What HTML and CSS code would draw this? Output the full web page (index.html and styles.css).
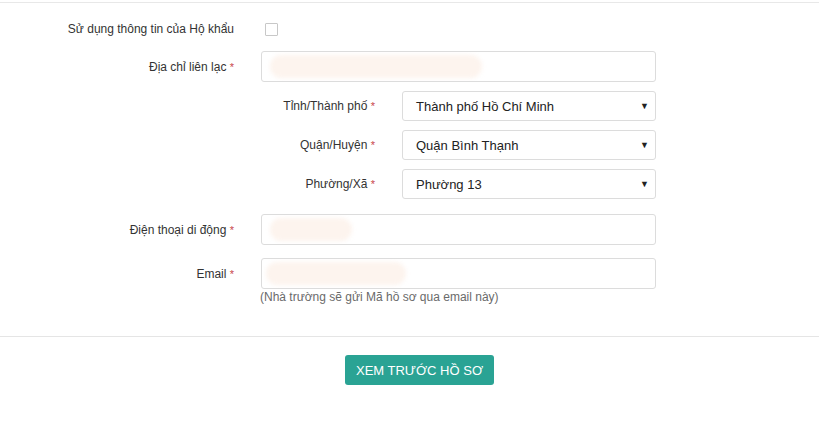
FILE: index.html
```html
<!DOCTYPE html>
<html lang="vi">
<head>
<meta charset="utf-8">
<link rel="stylesheet" href="styles.css">
</head>
<body>
<div class="panel">
  <div class="form">
    <div class="row row-check">
      <div class="label">Sử dụng thông tin của Hộ khẩu</div>
      <div class="field"><span class="checkbox"></span></div>
    </div>
    <div class="row row-addr">
      <div class="label">Địa chỉ liên lạc <span class="req">*</span></div>
      <div class="field"><div class="input"><span class="blur b-addr"></span></div></div>
    </div>
    <div class="sub">
      <div class="subrow">
        <div class="sublabel">Tỉnh/Thành phố <span class="req">*</span></div>
        <div class="select"><span>Thành phố Hồ Chí Minh</span><span class="caret">▼</span></div>
      </div>
      <div class="subrow">
        <div class="sublabel">Quận/Huyện <span class="req">*</span></div>
        <div class="select"><span>Quận Bình Thạnh</span><span class="caret">▼</span></div>
      </div>
      <div class="subrow">
        <div class="sublabel">Phường/Xã <span class="req">*</span></div>
        <div class="select"><span>Phường 13</span><span class="caret">▼</span></div>
      </div>
    </div>
    <div class="row row-phone">
      <div class="label">Điện thoại di động <span class="req">*</span></div>
      <div class="field"><div class="input"><span class="blur b-phone"></span></div></div>
    </div>
    <div class="row row-email">
      <div class="label">Email <span class="req">*</span></div>
      <div class="field">
        <div class="input"><span class="blur b-email"></span></div>
      </div>
    </div>
    <div class="help">(Nhà trường sẽ gửi Mã hồ sơ qua email này)</div>
  </div>
  <div class="footer">
    <button class="btn">XEM TRƯỚC HỒ SƠ</button>
  </div>
</div>
</body>
</html>
```
FILE: styles.css
```css
html, body {
  margin: 0;
  padding: 0;
  background: #fff;
}
body {
  font-family: "Liberation Sans", Arial, sans-serif;
  font-size: 12px;
  color: #333;
}
.panel {
  margin-top: 2px;
  border-top: 1px solid #e8e8e8;
}
.form {
  padding-top: 11px;
  padding-bottom: 31px;
  border-bottom: 1px solid #e5e5e5;
}
.row {
  display: flex;
  align-items: center;
  height: 30px;
}
.label {
  width: 261px;
  text-align: right;
  padding-right: 27px;
  box-sizing: border-box;
  flex: none;
}
.field {
  width: 395px;
  flex: none;
}
.req {
  color: #c8474a;
  font-size: 11px;
}
.checkbox {
  display: block;
  width: 11px;
  height: 11px;
  margin-left: 4px;
  border: 1px solid #c8c8c8;
  border-radius: 1px;
}
.row-addr {
  margin-top: 7px;
  height: 31px;
}
.input {
  height: 31px;
  box-sizing: border-box;
  border: 1px solid #dcdcdc;
  border-radius: 3px;
  position: relative;
  overflow: hidden;
}
.blur {
  position: absolute;
  top: 3px;
  height: 23px;
  background: #fdf4ee;
  border-radius: 12px;
  filter: blur(2px);
}
.b-addr { left: 8px; width: 212px; }
.b-phone { left: 8px; width: 82px; }
.b-email { left: 4px; width: 140px; }
.sub {
  margin-top: 9px;
  display: flex;
  flex-direction: column;
  gap: 9px;
}
.subrow {
  display: flex;
  align-items: center;
  height: 30px;
}
.sublabel {
  width: 402px;
  padding-right: 27px;
  box-sizing: border-box;
  text-align: right;
  flex: none;
}
.select {
  width: 254px;
  height: 30px;
  box-sizing: border-box;
  border: 1px solid #dcdcdc;
  border-radius: 3px;
  display: flex;
  align-items: center;
  justify-content: space-between;
  padding: 0 6px 0 13px;
  font-size: 13px;
  color: #222;
}
.caret {
  font-size: 9px;
  color: #222;
}
.row-phone {
  margin-top: 15px;
  height: 31px;
}
.row-email {
  margin-top: 13px;
  height: 31px;
}
.help {
  margin-left: 260px;
  margin-top: 1px;
  color: #6a6a6a;
  font-size: 12px;
  line-height: 15px;
}
.footer {
  display: flex;
  justify-content: center;
  padding: 18px 0 0 20px;
}
.btn {
  font-family: "Liberation Sans", Arial, sans-serif;
  font-size: 13px;
  color: #fff;
  background: #2aa394;
  border: none;
  border-radius: 3px;
  width: 149px;
  height: 30px;
  padding: 0;
}
```
